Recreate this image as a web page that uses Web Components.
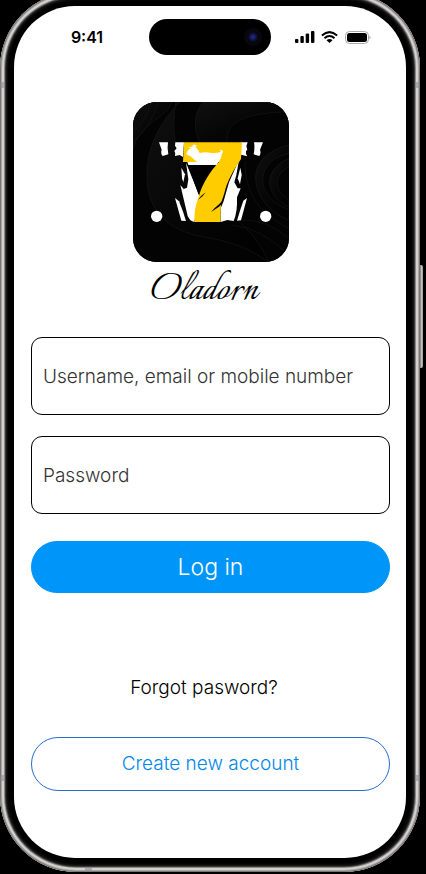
<!DOCTYPE html>
<html lang="en">
<head>
<meta charset="utf-8">
<meta name="viewport" content="width=device-width, initial-scale=1">
<title>Oladorn – Log in</title>
<style>
  body { margin: 0; background: #000; color: #000; font-family: Inter, "Liberation Sans", sans-serif; overflow: hidden; }
</style>
</head>
<body>
<login-page></login-page>
<script>
const define = (name, html, init) => {
  const template = document.createElement('template');
  template.innerHTML = html;
  customElements.define(name, class extends HTMLElement {
    constructor() {
      super();
      this.attachShadow({ mode: 'open' }).append(template.content.cloneNode(true));
    }
    connectedCallback() { if (init) init(this, this.shadowRoot); }
  });
};

/* Phone body: metal rim, dark bezel, screen and side button */
define('phone-frame', `
  <style>
    :host { display: block; position: relative; box-sizing: border-box; margin: -8px 6px 0 0; padding: 14px;
      min-height: calc(100vh + 6px); border-radius: 76px; background: #000;
      box-shadow: inset 0 0 0 1px #777, inset 0 0 0 2px #a9a6a5, inset 0 0 0 4px #d3d0cf, inset 0 0 0 5px #8b8988,
        inset 0 0 0 6px #3c3c3c, inset 0 0 3px 7px #222; display: flex; }
    .screen { flex: 1; background: #fff; border-radius: 61px; overflow: hidden; }
    .side { position: absolute; left: 100%; top: 273px; width: 3px; height: 103px; border-radius: 0 2px 2px 0;
      background: linear-gradient(90deg, #777, #d0cdcb 60%, #888); }
    .seam { position: absolute; width: 5px; height: 6px; background: #8888; }
    .a { left: 0; top: 90px } .b { right: 0; top: 90px } .c { left: 0; bottom: 91px } .d { right: 0; bottom: 91px }
    .e { left: 85px; bottom: 0; width: 7px; height: 5px }
  </style>
  <div class="screen"><slot></slot></div>
  <i class="side"></i><i class="seam a"></i><i class="seam b"></i><i class="seam c"></i><i class="seam d"></i><i class="seam e"></i>`);

define('status-bar', `
  <style>
    :host { display: grid; grid-template-columns: 1fr 122px 1fr; align-items: center; padding: 13px 0 0; }
    time { font: 600 16px/20px Inter, sans-serif; justify-self: center; padding-left: 11px; }
    .island { height: 36px; border-radius: 18px; background: #000; display: flex; align-items: center; justify-content: flex-end; }
    .lens { width: 18px; height: 18px; margin-right: 9px; border-radius: 50%; background: radial-gradient(circle, #1c2a80 0 1px, #11144d 3px, #08070d 5px); }
    .icons { display: flex; align-items: center; gap: 6px; padding-left: 24px; }
    svg { display: block; }
  </style>
  <time>9:41</time>
  <div class="island"><i class="lens"></i></div>
  <div class="icons">
    <svg width="20" height="12" viewBox="0 0 20 12"><rect x="0" y="8" width="3.4" height="4" rx="1"/><rect x="5.4" y="5" width="3.4" height="7" rx="1"/><rect x="10.7" y="2.5" width="3.4" height="9.500" rx="1"/><rect x="16" y="0" width="3.400" height="12" rx="1"/></svg>
    <svg width="17" height="12" viewBox="0 0 17 12"><g fill="none" stroke="#000" stroke-width="2"><path d="M.9 4.400Q8.500-2.200 16.100 4.400"/><path d="M3.500 7.200Q8.500 2.800 13.500 7.200"/></g><path d="M5.500 9.300Q8.500 6.900 11.500 9.300L8.500 12Z"/></svg>
    <svg width="27" height="13" viewBox="0 0 27 13"><rect x="1.500" y=".5" width="23" height="12" rx="4" fill="none" stroke="#aaa"/><rect x="3" y="2" width="20" height="9" rx="2.500"/><path d="M25.500 4.500Q27.500 6.500 25.500 8.500Z" fill="#999"/></svg>
  </div>`);

define('app-logo', `
  <style>
    :host { display: flex; flex-direction: column; align-items: center; }
    svg { display: block; width: 156px; height: 160px; border-radius: 24px; background: #000; }
    h1 { margin: 9px 0 0; padding-right: 12px; font: 400 47px/40px "Italianno", "Great Vibes", "Liberation Serif", serif; }
  </style>
  <svg viewBox="24 21 468 480" role="img" aria-label="Number seven emblem">
    <defs><linearGradient id="g" x1="0" y1="0" x2="1" y2="1"><stop offset="0" stop-color="#101010"/><stop offset=".5" stop-color="#060606"/><stop offset="1" stop-color="#000"/></linearGradient></defs>
    <path d="M24 21H492V501H24Z" fill="#030303"/>
    <g fill="url(#g)" stroke="#1e1e1e" stroke-width="1.500">
      <path d="M24 21H140C125 70 40 85 24 165Z"/>
      <path d="M165 21C110 75 60 155 66 260C72 350 130 405 230 425C330 440 390 470 430 501C350 300 110 330 152 21Z"/>
      <path d="M235 21C205 55 205 100 225 145H305C303 80 350 55 492 50V21Z"/>
      <path d="M492 150C430 165 390 200 392 250C396 320 450 360 492 375V345C430 320 407 280 415 240C424 205 450 185 492 175Z"/>
      <path d="M492 190C400 230 430 310 492 335V315C445 290 445 240 492 215Z"/>
    </g>
    <g fill="none" stroke="#1d1d1d" stroke-width="1.500"><path d="M24 110Q60 85 78 21M24 140Q78 100 98 21M345 375Q420 370 492 430M320 390Q410 400 480 470M360 200C360 280 390 350 492 400"/></g>
    <g fill="#fff">
      <path d="M102 142H129Q126 159 130 178L113 183Q106 175 110 164Z"/>
      <path d="M414 142H387Q390 159 386 178L403 183Q409 175 405 164Z"/>
      <path d="M151 142H177L174 186L164 180L150 183Q153 174 148 168L155 160L150 152Z"/>
      <path d="M347 142H368L364 153L367 164L363 168Q361 179 367 184L348 179Z"/>
      <path d="M183 203L224 304L208 381Q195 379 188 363L166 270L176 282L186 278L190 253Z"/>
      <path d="M169 218L180 238L175 262L171 250Z"/>
      <path d="M187 201H280L276 210H190Z"/>
      <path d="M342 195L334 240L328 262L338 280L347 280L336 307Q338 350 326 378L307 375L287 381V340L296 318L312 262Z"/>
      <path d="M346 218L350 240L345 268L338 250Z"/>
      <path d="M150 309L162 319Q175 350 183 378L169 377Z"/>
      <path d="M366 309L355 317Q345 345 336 377L348 376Z"/>
      <circle cx="95" cy="364" r="17"/><circle cx="422" cy="364" r="17"/>
    </g>
    <path d="M189 210H276Q234 256 221 300Z" fill="#000"/>
    <path d="M177 142H351L348 192C325 225 305 262 298 295L288 325Q286 350 287 381H208Q207 340 221 305C232 265 255 230 282 201H174Z" fill="#fc0"/>
    <path d="M184 177Q188 163 198 160L187 155Q200 157 203 154Q201 148 209 149L217 153L211 155Q220 163 224 174Q240 169 260 174Q277 175 287 171L285 165Q292 163 294 171L290 178Q290 188 286 192L281 201H216L198 185Q191 179 188 181Z" fill="#fff"/>
    <path d="M291 318L283 327Q270 337 258 351L281 336L290 327ZM242 292Q227 302 219 315L233 303Z" fill="#000"/>
  </svg>
  <h1><slot></slot></h1>`);

define('text-field', `
  <style>
    :host { display: block; }
    input { display: block; box-sizing: border-box; width: 100%; height: 78px; padding: 0 11px; border: 1px solid #000;
      border-radius: 11px; background: #fff; color: #000; font: 300 19px/24px Inter, "Liberation Sans", sans-serif; }
    input::placeholder { color: #333; opacity: 1; }
  </style>
  <input>`, (host, root) => {
    const input = root.querySelector('input');
    const label = host.getAttribute('label');
    input.type = host.getAttribute('type') || 'text';
    input.placeholder = label;
    input.setAttribute('aria-label', label);
  });

define('pill-button', `
  <style>
    :host { display: block; }
    button { display: block; box-sizing: border-box; width: 100%; padding: 11px; border: 1px solid #0095f9; border-radius: 27px;
      background: #0095f9; color: #fff; font: 300 23px/28px Inter, "Liberation Sans", sans-serif; cursor: pointer; }
    :host([outline]) button { padding: 12px; background: #fff; border-color: #2a6bd0; color: #0088ea; font-size: 19px; }
  </style>
  <button type="button"><slot></slot></button>`);

define('login-page', `
  <style>
    :host { display: block; }
    main { display: flex; flex-direction: column; padding: 47px 16px 0 17px; }
    app-logo { margin-bottom: 26px; }
    .fields { display: grid; gap: 21px; margin-bottom: 27px; }
    a { align-self: center; margin: 81px 13px 35px 0; color: #000; font: 300 19px/28px Inter, "Liberation Sans", sans-serif; text-decoration: none; }
  </style>
  <phone-frame>
    <status-bar></status-bar>
    <main>
      <app-logo>Oladorn</app-logo>
      <div class="fields">
        <text-field label="Username, email or mobile number"></text-field>
        <text-field label="Password" type="password"></text-field>
      </div>
      <pill-button>Log in</pill-button>
      <a href="#forgot">Forgot pasword?</a>
      <pill-button outline>Create new account</pill-button>
    </main>
  </phone-frame>`);
</script>
</body>
</html>
